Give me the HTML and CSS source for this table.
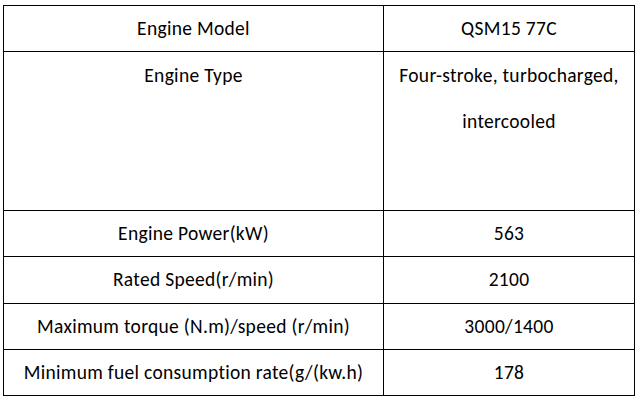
FILE: index.html
```html
<!DOCTYPE html>
<html>
<head>
<meta charset="utf-8">
<link rel="stylesheet" href="styles.css">
</head>
<body>
<table class="spec">
  <colgroup><col class="c1"><col class="c2"></colgroup>
  <tr class="row"><td>Engine Model</td><td>QSM15 77C</td></tr>
  <tr class="row tall"><td>Engine Type</td><td>Four-stroke, turbocharged,<br>intercooled</td></tr>
  <tr class="row"><td>Engine Power(kW)</td><td>563</td></tr>
  <tr class="row r47"><td>Rated Speed(r/min)</td><td>2100</td></tr>
  <tr class="row"><td>Maximum torque (N.m)/speed (r/min)</td><td>3000/1400</td></tr>
  <tr class="row"><td>Minimum fuel consumption rate(g/(kw.h)</td><td>178</td></tr>
</table>
</body>
</html>
```
FILE: styles.css
```css
html, body {
  margin: 0;
  padding: 0;
  background: #fff;
}
body {
  padding: 5px 0 0 3px;
}
.spec {
  border-collapse: collapse;
  table-layout: fixed;
  width: 632px;
  font-family: "Carlito", "Lato", "Liberation Sans", sans-serif;
  font-size: 19.5px;
  letter-spacing: 0.3px;
  color: #000;
}
.c1 { width: 380px; }
.c2 { width: 251px; }
.spec td {
  border: 1px solid #000;
  padding: 0;
  text-align: center;
  vertical-align: top;
  line-height: 45px;
  height: 45px;
}
.spec .tall td { height: 158px; line-height: 46px; }
.spec .r47 td { height: 46px; }
```
